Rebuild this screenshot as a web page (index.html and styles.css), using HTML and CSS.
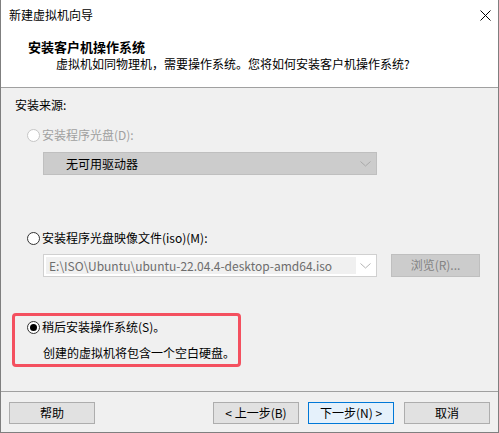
FILE: index.html
```html
<!DOCTYPE html>
<html lang="zh-CN">
<head>
  <meta charset="UTF-8">
  <title>新建虚拟机向导</title>
  <link rel="stylesheet" href="styles.css">
</head>
<body>
  <div class="window">
    <!-- Title bar -->
    <div class="titlebar">
      <span class="title">新建虚拟机向导</span>
      <span class="close">
        <svg width="11" height="11" viewBox="0 0 11 11"><path d="M0.5 0.5 L10.5 10.5 M10.5 0.5 L0.5 10.5" stroke="#000" stroke-width="1"/></svg>
      </span>
    </div>

    <!-- Page header -->
    <div class="header">
      <div class="header-title">安装客户机操作系统</div>
      <div class="header-sub">虚拟机如同物理机，需要操作系统。您将如何安装客户机操作系统?</div>
    </div>

    <!-- Install source options -->
    <div class="content">
      <div class="group-label">安装来源:</div>

      <label class="radio-row disabled">
        <span class="radio"></span>
        <span>安装程序光盘(D):</span>
      </label>
      <div class="combo combo-disabled">
        <span class="combo-text">无可用驱动器</span>
        <svg class="chevron" width="11" height="6" viewBox="0 0 11 6"><path d="M0.5 0.5 L5.5 5 L10.5 0.5" fill="none" stroke="#a8a8a8"/></svg>
      </div>

      <label class="radio-row iso-radio">
        <span class="radio"></span>
        <span>安装程序光盘映像文件(iso)(M):</span>
      </label>
      <div class="iso-row">
        <div class="combo combo-edit">
          <span class="edit-field">E:\ISO\Ubuntu\ubuntu-22.04.4-desktop-amd64.iso</span>
          <svg class="chevron" width="11" height="6" viewBox="0 0 11 6"><path d="M0.5 0.5 L5.5 5 L10.5 0.5" fill="none" stroke="#b4b4b4"/></svg>
        </div>
        <button class="btn btn-disabled">浏览(R)...</button>
      </div>

      <div class="later-box">
        <label class="radio-row">
          <span class="radio checked"></span>
          <span>稍后安装操作系统(S)。</span>
        </label>
        <div class="later-note">创建的虚拟机将包含一个空白硬盘。</div>
      </div>
    </div>

    <!-- Wizard buttons -->
    <div class="footer">
      <button class="btn">帮助</button>
      <div class="nav">
        <button class="btn">&lt; 上一步(B)</button>
        <button class="btn btn-default">下一步(N) &gt;</button>
        <button class="btn btn-cancel">取消</button>
      </div>
    </div>
  </div>
</body>
</html>
```

FILE: styles.css
```css
* {
  margin: 0;
  padding: 0;
  box-sizing: border-box;
}

body {
  font-family: "Noto Sans CJK SC", "Noto Sans", sans-serif;
  font-size: 12px;
  color: #000;
  background: #f0f0f0;
}

.window {
  width: 499px;
  height: 433px;
  display: flex;
  flex-direction: column;
  background: #f0f0f0;
  border-left: 1px solid #7f7f7f;
  border-right: 1px solid #7f7f7f;
  border-bottom: 1px solid #7f7f7f;
}

/* Title bar */
.titlebar {
  height: 30px;
  background: #fff;
  display: flex;
  align-items: center;
  justify-content: space-between;
  padding: 0 7px 0 8px;
}

.title {
  line-height: 16px;
}

.close {
  display: flex;
  width: 11px;
  height: 11px;
}

/* Header */
.header {
  height: 58px;
  background: #fff;
  border-bottom: 1px solid #a0a0a0;
  padding: 8px 0 0 27px;
}

.header-title {
  font-size: 13px;
  font-weight: bold;
  line-height: 18px;
}

.header-sub {
  line-height: 16px;
  padding-left: 28px;
}

/* Content */
.content {
  flex: 1;
  padding: 9px 0 0 14px;
  border-bottom: 1px solid #a0a0a0;
}

.group-label {
  line-height: 16px;
}

.radio-row {
  display: flex;
  align-items: center;
  gap: 2px;
  line-height: 16px;
  margin: 14px 0 0 12px;
}

.radio {
  width: 13px;
  height: 13px;
  border: 1px solid #333;
  border-radius: 50%;
  background: #fff;
  display: flex;
  align-items: center;
  justify-content: center;
}

.radio.checked::after {
  content: "";
  width: 7px;
  height: 7px;
  border-radius: 50%;
  background: #000;
}

.disabled {
  color: #a0a0a0;
}

.disabled .radio {
  border-color: #c6c6c6;
}

.combo {
  width: 334px;
  height: 23px;
  display: flex;
  align-items: center;
  justify-content: space-between;
  margin-left: 28px;
}

.combo-disabled {
  margin-top: 9px;
  background: #cccccc;
  border: 1px solid #bfbfbf;
  padding: 0 5px 0 22px;
}

.combo-text {
  line-height: 16px;
}

.iso-radio {
  margin-top: 55px;
}

.iso-row {
  display: flex;
  align-items: center;
  gap: 14px;
  margin-top: 7px;
}

.combo-edit {
  background: #fff;
  border: 1px solid #d0d0d0;
  padding: 2px 5px 2px 2px;
  margin-top: 1px;
}

.edit-field {
  width: 310px;
  height: 17px;
  background: #f0f0f0;
  color: #6d6d6d;
  line-height: 17px;
  padding-left: 3px;
  white-space: nowrap;
  overflow: hidden;
}

/* Buttons */
.btn {
  font-family: inherit;
  font-size: 12px;
  width: 86px;
  height: 22px;
  background: #e1e1e1;
  border: 1px solid #adadad;
  color: #000;
  line-height: 16px;
}

.btn-disabled {
  width: 89px;
  height: 23px;
  background: #cccccc;
  border-color: #bfbfbf;
  color: #838383;
}

.btn-default {
  background: #e5f1fb;
  border-color: #0078d7;
}

/* Highlighted "install later" option */
.later-box {
  width: 229px;
  height: 54px;
  margin: 36px 0 0 -3px;
  border: 3px solid #f4505f;
  border-radius: 4px;
  padding-top: 0;
}

.later-box .radio-row {
  margin: 3px 0 0 12px;
}

.later-note {
  line-height: 16px;
  margin: 10px 0 0 28px;
}

/* Footer */
.footer {
  height: 40px;
  display: flex;
  justify-content: space-between;
  align-items: flex-start;
  padding: 10px 8px 0 8px;
}

.nav {
  display: flex;
  gap: 9px;
}

.btn-cancel {
  margin-left: 1px;
}
```
